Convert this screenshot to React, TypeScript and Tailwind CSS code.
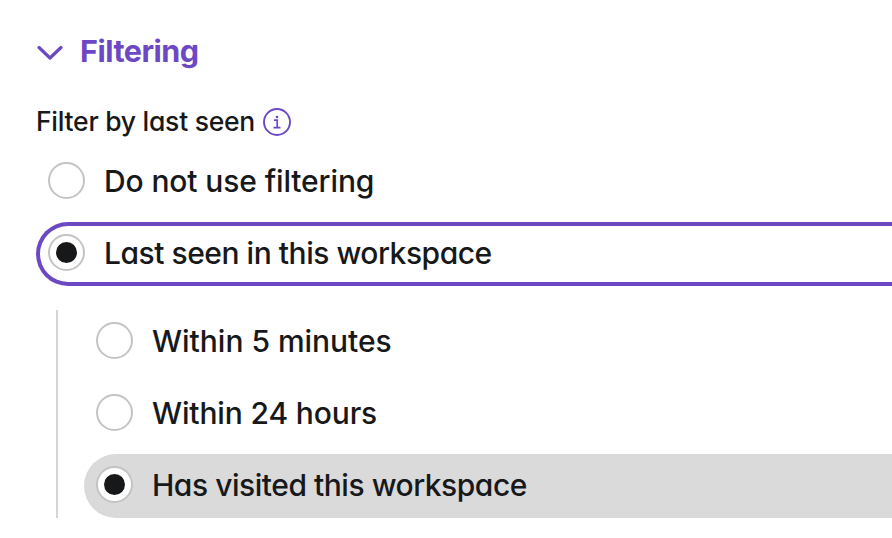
type OptionProps = {
  label: string;
  tracking: string;
  checked?: boolean;
  variant?: string;
};

function Option({ label, tracking, checked = false, variant = "" }: OptionProps) {
  return (
    <label className={`flex h-16 shrink-0 items-center gap-[19px] rounded-l-full pl-3 ${variant}`}>
      <span className="mb-[3px] flex size-[37px] shrink-0 items-center justify-center rounded-full border-2 border-[#c4c4c4] bg-white">
        {checked && <span className="size-[21px] rounded-full bg-[#17181a]" />}
      </span>
      <span className={`mb-0.5 whitespace-nowrap text-[30px] leading-9 font-[470] ${tracking}`}>{label}</span>
    </label>
  );
}

export default function App() {
  return (
    <main className="flex h-[538px] w-[892px] flex-col overflow-hidden bg-white pt-8 pl-9 font-['Inter','Lato',sans-serif] text-[#17181a] [font-feature-settings:'cv11'_1]">
      <h2 className="flex h-10 items-center gap-[17px] text-[#6d48c4]">
        <svg width="27" height="20" viewBox="0 0 27 20" fill="none" className="mt-0.5">
          <path d="M3 4.5 14 15 25 4.5" stroke="currentColor" strokeWidth="3.2" strokeLinecap="round" strokeLinejoin="round" />
        </svg>
        <span className="mb-0.5 text-[30.5px] leading-10 font-[650] tracking-[-0.5px]">Filtering</span>
      </h2>

      <div className="mt-[30px] flex h-10 items-center gap-2">
        <span className="mb-0.5 whitespace-nowrap text-[26.5px] leading-10 font-[450] tracking-[-0.26px]">Filter by last seen</span>
        <svg width="28" height="28" viewBox="0 0 28 28" fill="none" stroke="#6d48c4">
          <circle cx="14" cy="14" r="13" strokeWidth="1.9" />
          <path d="M11 12.2h3.2v7.3M10.5 19.6h7" strokeWidth="1.7" />
          <circle cx="14" cy="9" r="1.3" fill="#6d48c4" stroke="none" />
        </svg>
      </div>

      <div className="mt-2 flex flex-col gap-2">
        <Option label="Do not use filtering" tracking="tracking-[-0.12px]" />
        <Option
          label="Last seen in this workspace"
          tracking="tracking-[-0.47px]"
          checked
          variant="shadow-[inset_0_0_0_4px_#6d48c4] -mr-10"
        />
      </div>

      <div className="mt-6 ml-5 flex flex-col gap-2 border-l-2 border-[#d5d5d5] pl-[26px]">
        <Option label="Within 5 minutes" tracking="tracking-[-0.02px]" />
        <Option label="Within 24 hours" tracking="tracking-[-0.14px]" />
        <Option label="Has visited this workspace" tracking="tracking-[-0.47px]" checked variant="bg-[#dadada]" />
      </div>
    </main>
  );
}
